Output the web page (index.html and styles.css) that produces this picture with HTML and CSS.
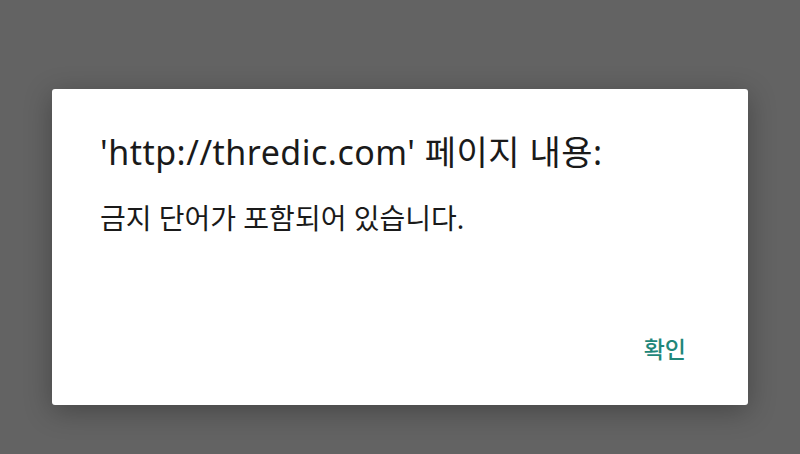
FILE: index.html
```html
<!DOCTYPE html>
<html lang="ko">
<head>
    <meta charset="UTF-8">
    <meta name="viewport" content="width=device-width, initial-scale=1.0">
    <title>페이지 내용</title>
    <link rel="stylesheet" href="styles.css">
</head>
<body>
    <div class="dialog">
        <h2 class="dialog-title">'http://thredic.com' 페이지 내용:</h2>
        <p class="dialog-message">금지 단어가 포함되어 있습니다.</p>
        <div class="dialog-actions">
            <button class="dialog-button">확인</button>
        </div>
    </div>
</body>
</html>
```

FILE: styles.css
```css
body {
    margin: 0;
    padding: 0;
    height: 454px;
    overflow: hidden;
    background: #636363;
    font-family: "Noto Sans", "Noto Sans CJK KR", sans-serif;
    color: #1a1a1a;
}

.dialog {
    margin: 89px 52px 0 52px;
    height: 316px;
    box-sizing: border-box;
    background: #ffffff;
    border-radius: 3px;
    box-shadow: 0 6px 28px rgba(0, 0, 0, 0.3);
    padding: 41px 48px 0 48px;
    display: flex;
    flex-direction: column;
}

.dialog-title {
    margin: 0;
    font-size: 34px;
    font-weight: 400;
    line-height: 44px;
    letter-spacing: 0.5px;
    white-space: nowrap;
}

.dialog-message {
    margin: 26px 0 0 0;
    font-size: 28px;
    line-height: 36px;
}

.dialog-actions {
    display: flex;
    justify-content: flex-end;
    margin-top: 98px;
}

.dialog-button {
    border: none;
    background: transparent;
    padding: 0 14px 0 0;
    font-family: inherit;
    font-size: 23px;
    font-weight: 500;
    line-height: 30px;
    color: #1f877a;
    cursor: pointer;
}
```
